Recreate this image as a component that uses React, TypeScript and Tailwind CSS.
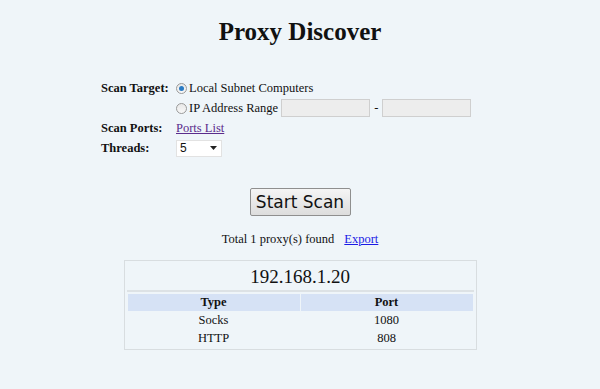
import React from 'react';

const serif = "font-['Liberation_Serif',serif]";

const Radio = ({ checked }: { checked?: boolean }) => (
  <span className="inline-flex h-[11px] w-[11px] items-center justify-center rounded-full border border-[#9a9a9a] bg-gradient-to-b from-[#e8e8e8] to-[#f8f8f8] mr-[2px]">
    {checked && <span className="h-[5px] w-[5px] rounded-full bg-[#2a7bc4]" />}
  </span>
);

export default function App() {
  const rows = [
    { type: 'Socks', port: '1080' },
    { type: 'HTTP', port: '808' },
  ];

  return (
    <div className={`min-h-[389px] w-[600px] bg-[#eff5f9] text-[#111] ${serif}`}>
      <h1 className="pt-[17px] text-center text-[25px] font-bold leading-[30px]">Proxy Discover</h1>

      {/* Scan settings */}
      <div className="mt-[32px] ml-[101px] text-[12.5px]">
        <div className="flex items-center h-[19px]">
          <span className="w-[75px] font-bold">Scan Target:</span>
          <Radio checked />
          <span>Local Subnet Computers</span>
        </div>
        <div className="flex items-center h-[20px]">
          <span className="w-[75px]" />
          <Radio />
          <span>IP Address Range</span>
          <input className="ml-[3px] h-[18px] w-[89px] border border-[#cfcfcf] bg-[#ededed]" />
          <span className="mx-[4px]">-</span>
          <input className="h-[18px] w-[89px] border border-[#cfcfcf] bg-[#ededed]" />
        </div>
        <div className="flex items-center h-[20px]">
          <span className="w-[75px] font-bold">Scan Ports:</span>
          <a href="#" className="text-[#5b2c8c] underline">Ports List</a>
        </div>
        <div className="flex items-center h-[20px]">
          <span className="w-[75px] font-bold">Threads:</span>
          <div className="flex h-[17px] w-[46px] items-center justify-between border border-[#e2e2e2] bg-white pl-[3px] pr-[4px] font-['Liberation_Sans',sans-serif] text-[12px]">
            <span>5</span>
            <svg width="7" height="4" viewBox="0 0 7 4"><path d="M0 0h7L3.5 4z" fill="#222" /></svg>
          </div>
        </div>
      </div>

      <div className="mt-[30px] flex justify-center">
        <button className="h-[28px] w-[101px] rounded-[2px] border border-[#8f8f8f] bg-gradient-to-b from-[#f5f5f5] to-[#dddddd] font-['DejaVu_Sans',sans-serif] text-[17px] leading-none text-[#111]">
          Start Scan
        </button>
      </div>

      <div className="mt-[14px] flex justify-center text-[12.5px]">
        <span>Total 1 proxy(s) found</span>
        <a href="#" className="ml-[10px] text-[#1a1ae6] underline">Export</a>
      </div>

      <div className="mx-auto mt-[11px] w-[353px] border border-[#d8dde0] p-[2px] pb-[1px]">
        <div className="border-b-2 border-[#dde2e5] text-center text-[19px] leading-[27px]">192.168.1.20</div>
        <table className="mt-[1px] w-full border-separate border-spacing-[1px] text-[12.5px] leading-[16px]">
          <thead>
            <tr className="bg-[#d6e2f5]">
              <th className="h-[17px] w-1/2 p-0 font-bold">Type</th>
              <th className="h-[17px] w-1/2 p-0 font-bold">Port</th>
            </tr>
          </thead>
          <tbody>
            {rows.map(r => (
              <tr key={r.type}>
                <td className="h-[17px] p-0 text-center">{r.type}</td>
                <td className="h-[17px] p-0 text-center">{r.port}</td>
              </tr>
            ))}
          </tbody>
        </table>
      </div>
    </div>
  );
}
